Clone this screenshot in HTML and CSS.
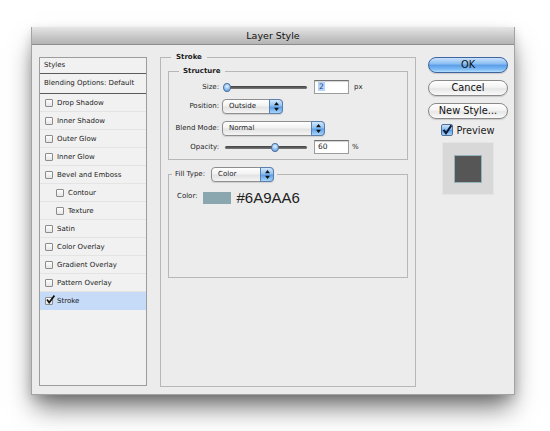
FILE: index.html
```html
<!DOCTYPE html>
<html lang="en">

<head>
    <meta charset="UTF-8">
    <meta name="viewport" content="width=device-width, initial-scale=1.0">
    <title>Layer Style</title>
    <link rel="stylesheet" href="styles.css">
</head>

<body>
    <div class="window">
        <div class="titlebar">Layer Style</div>

        <div class="dialog">
            <!-- Styles list -->
            <div class="styles-panel">
                <div class="panel-head">Styles</div>
                <div class="panel-head blending">Blending Options: Default</div>
                <ul class="effects">
                    <li><span class="box"></span>Drop Shadow</li>
                    <li><span class="box"></span>Inner Shadow</li>
                    <li><span class="box"></span>Outer Glow</li>
                    <li><span class="box"></span>Inner Glow</li>
                    <li><span class="box"></span>Bevel and Emboss</li>
                    <li class="sub"><span class="box"></span>Contour</li>
                    <li class="sub"><span class="box"></span>Texture</li>
                    <li><span class="box"></span>Satin</li>
                    <li><span class="box"></span>Color Overlay</li>
                    <li><span class="box"></span>Gradient Overlay</li>
                    <li><span class="box"></span>Pattern Overlay</li>
                    <li class="selected">
                        <span class="box checked">
                            <svg viewBox="0 0 10 10" width="10" height="10"><path d="M2 4.6 L4.2 7.6 L9.4 0.6" fill="none" stroke="#111" stroke-width="1.7"/></svg>
                        </span>Stroke
                    </li>
                </ul>
            </div>

            <!-- Stroke settings -->
            <fieldset class="group stroke">
                <legend>Stroke</legend>

                <fieldset class="group structure">
                    <legend>Structure</legend>

                    <div class="row">
                        <label class="row-label">Size:</label>
                        <div class="slider">
                            <span class="track"></span>
                            <span class="knob" style="left: 0.4%"></span>
                        </div>
                        <span class="field"><span class="selected-text">2</span></span>
                        <span class="unit">px</span>
                    </div>

                    <div class="row">
                        <label class="row-label">Position:</label>
                        <span class="select select-position">Outside
                            <span class="select-cap"><svg viewBox="0 0 5 9" width="5" height="9"><path d="M2.5 0 L5 3.2 L0 3.2Z M2.5 9 L5 5.8 L0 5.8Z" fill="#111"/></svg></span>
                        </span>
                    </div>

                    <div class="row row-blend">
                        <label class="row-label">Blend Mode:</label>
                        <span class="select select-blend">Normal
                            <span class="select-cap"><svg viewBox="0 0 5 9" width="5" height="9"><path d="M2.5 0 L5 3.2 L0 3.2Z M2.5 9 L5 5.8 L0 5.8Z" fill="#111"/></svg></span>
                        </span>
                    </div>

                    <div class="row">
                        <label class="row-label">Opacity:</label>
                        <div class="slider">
                            <span class="track"></span>
                            <span class="knob" style="left: 60%"></span>
                        </div>
                        <span class="field">60</span>
                        <span class="unit unit-pct">%</span>
                    </div>
                </fieldset>

                <fieldset class="group fill">
                    <legend>
                        <span class="fill-label">Fill Type:</span>
                        <span class="select select-fill">Color
                            <span class="select-cap"><svg viewBox="0 0 5 9" width="5" height="9"><path d="M2.5 0 L5 3.2 L0 3.2Z M2.5 9 L5 5.8 L0 5.8Z" fill="#111"/></svg></span>
                        </span>
                    </legend>
                    <div class="fill-body">
                        <div class="color-row">
                            <span class="color-label">Color:</span>
                            <span class="swatch"></span>
                            <span class="hex">#6A9AA6</span>
                        </div>
                    </div>
                </fieldset>
            </fieldset>

            <!-- Buttons and preview -->
            <div class="actions">
                <button class="btn btn-default">OK</button>
                <button class="btn">Cancel</button>
                <button class="btn">New Style...</button>
                <label class="preview-check">
                    <span class="aqua-box">
                        <svg viewBox="0 0 12 12" width="12" height="12"><path d="M2.6 5.8 L5 9.2 L10.4 1.4" fill="none" stroke="#0d1a33" stroke-width="2"/></svg>
                    </span>Preview
                </label>
                <div class="preview-box">
                    <div class="preview-swatch"></div>
                </div>
            </div>
        </div>
    </div>
</body>

</html>
```

FILE: styles.css
```css
* {
    box-sizing: border-box;
}

body {
    margin: 0;
    width: 550px;
    height: 431px;
    overflow: hidden;
    background-color: #fff;
    font-family: "DejaVu Sans", sans-serif;
}

.window {
    width: 484px;
    height: 368px;
    margin: 27px 0 0 31px;
    background-color: #ececec;
    border: 1px solid #a3a3a3;
    border-top: none;
    box-shadow: 0 16px 24px -4px rgba(0, 0, 0, 0.55), 0 4px 10px rgba(0, 0, 0, 0.14);
    font-size: 7px;
    color: #1c1c1c;
}

.titlebar {
    height: 18px;
    border-bottom: 1px solid #8c8c8c;
    background: linear-gradient(#e6e6e6, #c6c6c6 60%, #b4b4b4);
    text-align: center;
    font-size: 9.5px;
    line-height: 17px;
    color: #111;
}

.dialog {
    display: grid;
    grid-template-columns: 108px 255px 80px;
    column-gap: 13px;
    height: 349px;
    padding: 7px;
}

.dialog > .stroke {
    margin-right: -1px;
}

/* Styles list */

.styles-panel {
    margin: 5px 0 1px;
    border: 1px solid #9c9c9c;
    background-color: #f1f1f1;
}

.panel-head {
    height: 16px;
    padding-left: 4px;
    line-height: 15px;
    border-bottom: 1px solid #5a5a5a;
}

.panel-head.blending {
    height: 20px;
    line-height: 19px;
}

.effects {
    list-style: none;
    margin: 0;
    padding: 0;
}

.effects li {
    display: flex;
    align-items: center;
    height: 18px;
    padding-left: 5px;
    border-bottom: 1px solid #e4e4e4;
}

.effects li.sub {
    padding-left: 16px;
}

.effects li.selected {
    background-color: #c6dbf7;
    border-bottom-color: #c6dbf7;
}

.box {
    position: relative;
    width: 8px;
    height: 8px;
    margin-right: 4px;
    border: 1px solid #8b8b8b;
    border-radius: 1px;
    background: linear-gradient(#fdfdfd, #e6e6e6);
}

.box.checked svg {
    position: absolute;
    left: -1px;
    top: -3px;
}

/* Group boxes */

.group {
    margin: 0;
    min-width: 0;
    border: 1px solid #b7b7b7;
}

.group legend {
    line-height: 10px;
    padding: 0 5px;
    font-weight: bold;
}

.stroke {
    padding: 4px 7px 0;
}

.stroke > legend {
    margin-left: 3px;
}

.structure {
    padding: 2px 0 3px;
}

.structure > legend {
    margin-left: 10px;
    padding: 0 4px;
}

.row {
    display: flex;
    align-items: center;
    gap: 3px;
    height: 18px;
}

.row + .row {
    margin-top: 1px;
}

.row.row-blend {
    margin-top: 4px;
}

.row-label {
    width: 50px;
    text-align: right;
}

.slider {
    position: relative;
    width: 80px;
    height: 9px;
    margin: 0 4px 0 5px;
}

.track {
    position: absolute;
    left: -2px;
    right: 0;
    top: 3px;
    height: 3px;
    border-radius: 2px;
    background: linear-gradient(#3f3f3f, #7a7a7a);
}

.knob {
    position: absolute;
    top: 0;
    width: 8px;
    height: 9px;
    margin-left: -4px;
    border: 1px solid #50719c;
    border-radius: 50%;
    background: radial-gradient(circle at 50% 35%, #e6f2ff, #8dbdf0 55%, #4f8fd9);
}

.field {
    width: 35px;
    height: 14px;
    padding-left: 3px;
    border: 1px solid #9d9d9d;
    border-top-color: #707070;
    background-color: #fff;
    box-shadow: inset 0 1px 1px rgba(0, 0, 0, 0.18);
    font-size: 7.5px;
    line-height: 12px;
}

.selected-text {
    padding: 0 1px;
    background-color: #b4d3fb;
    color: #1e3f7a;
}

.unit {
    margin-left: 2px;
}

.unit-pct {
    margin-left: 0;
}

.select {
    position: relative;
    display: inline-block;
    height: 15px;
    padding-left: 6px;
    border: 1px solid #8e8e8e;
    border-radius: 4px;
    background: linear-gradient(#ffffff, #f2f2f2 45%, #e3e3e3 55%, #f4f4f4);
    box-shadow: 0 1px 1px rgba(0, 0, 0, 0.12);
    font-size: 7px;
    font-weight: normal;
    line-height: 13px;
}

.select-position {
    width: 61px;
}

.select-blend {
    width: 103px;
}

.select-fill {
    width: 63px;
}

.select-cap {
    position: absolute;
    top: -1px;
    right: -1px;
    bottom: -1px;
    width: 14px;
    display: flex;
    align-items: center;
    justify-content: center;
    border: 1px solid #5b7fae;
    border-radius: 0 4px 4px 0;
    background: linear-gradient(#d3e8fc, #8ec2f3 45%, #5d9fe8 55%, #a8d5fb);
}

/* Fill type */

.fill {
    margin-top: 7px;
    padding: 7px 8px 0 3px;
}

.fill > legend {
    display: flex;
    align-items: center;
    gap: 6px;
    padding: 0 3px;
    line-height: 15px;
    font-weight: normal;
}

.fill-body {
    height: 88px;
}

.color-row {
    display: flex;
    align-items: flex-start;
    height: 18px;
    padding-left: 5px;
}

.color-label {
    line-height: 14px;
}

.swatch {
    width: 28px;
    height: 12px;
    margin: 3px 6px 0 5px;
    background-color: #8aa6ae;
}

.hex {
    font-family: "Liberation Sans", Arial, sans-serif;
    font-size: 15px;
    line-height: 18px;
    color: #222;
}

/* Buttons and preview */

.actions {
    display: flex;
    flex-direction: column;
    align-items: center;
    margin-top: 5px;
}

.btn {
    width: 80px;
    height: 16px;
    padding: 0;
    border: 1px solid #8a8a8a;
    border-radius: 8px;
    background: linear-gradient(#ffffff, #f3f3f3 45%, #e6e6e6 55%, #fafafa);
    box-shadow: 0 1px 1px rgba(0, 0, 0, 0.15);
    font-family: "DejaVu Sans", sans-serif;
    font-size: 9.8px;
    line-height: 14px;
    color: #111;
}

.btn + .btn {
    margin-top: 7px;
}

.btn-default {
    border-color: #3f64a0;
    background: linear-gradient(#c9e1fb, #8abef3 42%, #5b9de8 52%, #7cbaf5 80%, #b4defc);
}

.preview-check {
    display: flex;
    align-items: center;
    gap: 3px;
    height: 12px;
    margin-top: 5px;
    font-size: 9.8px;
}

.aqua-box {
    width: 12px;
    height: 12px;
    border: 1px solid #4f6f9b;
    border-radius: 2px;
    background: linear-gradient(#cfe5fb, #7fb6ee 50%, #5d9ee6 55%, #a9d3fa);
}

.aqua-box svg {
    display: block;
    margin: -1px 0 0 -1px;
}

.preview-box {
    display: flex;
    align-items: center;
    justify-content: center;
    width: 52px;
    height: 53px;
    margin-top: 6px;
    border: 1px solid #e4e4e4;
    background-color: #d8d8d8;
}

.preview-swatch {
    width: 28px;
    height: 28px;
    border: 1px solid #93b2ba;
    background-color: #565656;
}
```
